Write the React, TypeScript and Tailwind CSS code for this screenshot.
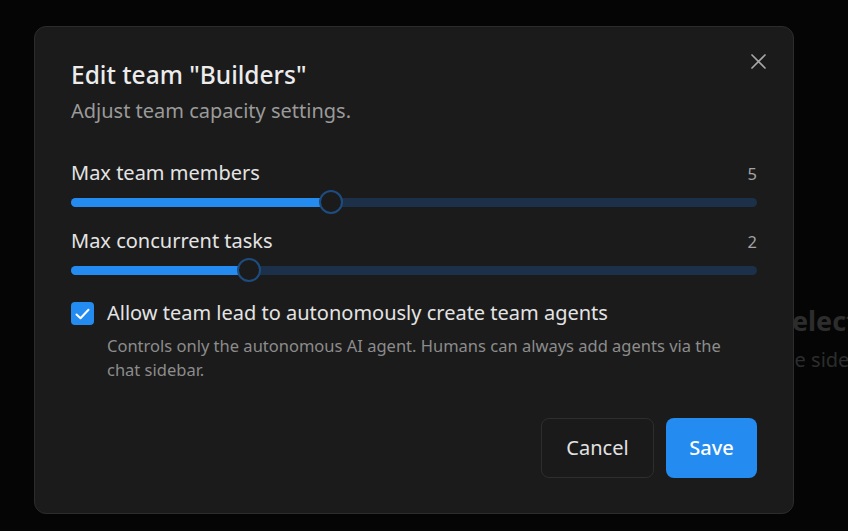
import { useState } from "react";

const font = { fontFamily: '"Noto Sans", "Open Sans", sans-serif' };

function CapSlider({ label, value, frac }: { label: string; value: number; frac: number }) {
  return (
    <div className="flex flex-col">
      <div className="flex items-end justify-between h-[26px]">
        <span className="text-[20px] leading-[26px] text-[#e4e4e4]">{label}</span>
        <span className="text-[16.5px] leading-[24px] text-[#a3a3a3]">{value}</span>
      </div>
      <div className="relative h-[24px] mt-[4px] flex items-center">
        <div className="h-[9px] w-full rounded-full bg-[#1d3049] overflow-hidden">
          <div className="h-full bg-[#248cf0]" style={{ width: `calc(11.5px + ${frac} * (100% - 23px))` }} />
        </div>
        <div
          className="absolute top-0 w-[24px] h-[24px] rounded-full bg-[#1b1b1b] border-2 border-[#1d4d80]"
          style={{ left: `calc(${frac} * (100% - 24px))` }}
        />
      </div>
    </div>
  );
}

export default function App() {
  const [allow, setAllow] = useState(true);

  return (
    <div className="relative w-[848px] h-[531px] bg-[#050505] overflow-hidden" style={font}>
      {/* page behind the modal */}
      <div className="flex flex-col pt-[303px] gap-[8px] text-[#2d2d2d] whitespace-nowrap">
        <span className="pl-[777px] text-[27px] font-bold leading-[36px]">Select a team</span>
        <span className="pl-[775px] text-[20px] leading-[26px]">the sidebar</span>
      </div>

      {/* modal */}
      <div className="absolute left-[34px] top-[26px] w-[760px] h-[488px] rounded-[12px] border border-[#2c2c2c] bg-[#1b1b1b] px-[36px] pt-[30px] pb-[35px] flex flex-col">
        <div className="flex items-start justify-between">
          <h2 className="text-[24.5px] font-medium leading-[36px] text-[#ececec]">Edit team "Builders"</h2>
          <button className="mt-[-11px] mr-[-16px] w-[30px] h-[30px] flex items-center justify-center text-[#a6a6a6]">
            <svg width="15" height="15" viewBox="0 0 15 15" fill="none" stroke="currentColor" strokeWidth="1.7" strokeLinecap="round">
              <path d="M1 1L14 14M14 1L1 14" />
            </svg>
          </button>
        </div>
        <p className="text-[20px] leading-[28px] text-[#9a9a9a] mt-[4px]">Adjust team capacity settings.</p>

        <div className="flex flex-col gap-[14px] mt-[35px]">
          <CapSlider label="Max team members" value={5} frac={0.375} />
          <CapSlider label="Max concurrent tasks" value={2} frac={0.25} />
        </div>

        <div className="flex gap-[13px] mt-[18px]">
          <button
            onClick={() => setAllow(a => !a)}
            className={`mt-[2px] w-[23px] h-[23px] shrink-0 rounded-[4px] flex items-center justify-center ${allow ? "bg-[#248cf0]" : "border border-[#444]"}`}
          >
            {allow && (
              <svg width="15" height="12" viewBox="0 0 15 12" fill="none" stroke="#fff" strokeWidth="2" strokeLinecap="round" strokeLinejoin="round">
                <path d="M1.5 6.5L5.5 10.2L13.5 1.8" />
              </svg>
            )}
          </button>
          <div className="flex flex-col">
            <span className="text-[20px] leading-[26px] text-[#e4e4e4]">Allow team lead to autonomously create team agents</span>
            <span className="text-[16.5px] leading-[24px] text-[#8c8c8c] mt-[8px] pr-[10px]">
              Controls only the autonomous AI agent. Humans can always add agents via the chat sidebar.
            </span>
          </div>
        </div>

        <div className="flex-1" />
        <div className="flex justify-end gap-[12px]">
          <button className="w-[113px] h-[60px] rounded-[8px] border border-[#2e2e2e] bg-[#1a1a1a] text-[20px] text-[#e2e2e2]">
            Cancel
          </button>
          <button className="w-[91px] h-[60px] rounded-[8px] bg-[#248cf0] text-[20px] text-white font-medium">
            Save
          </button>
        </div>
      </div>
    </div>
  );
}
